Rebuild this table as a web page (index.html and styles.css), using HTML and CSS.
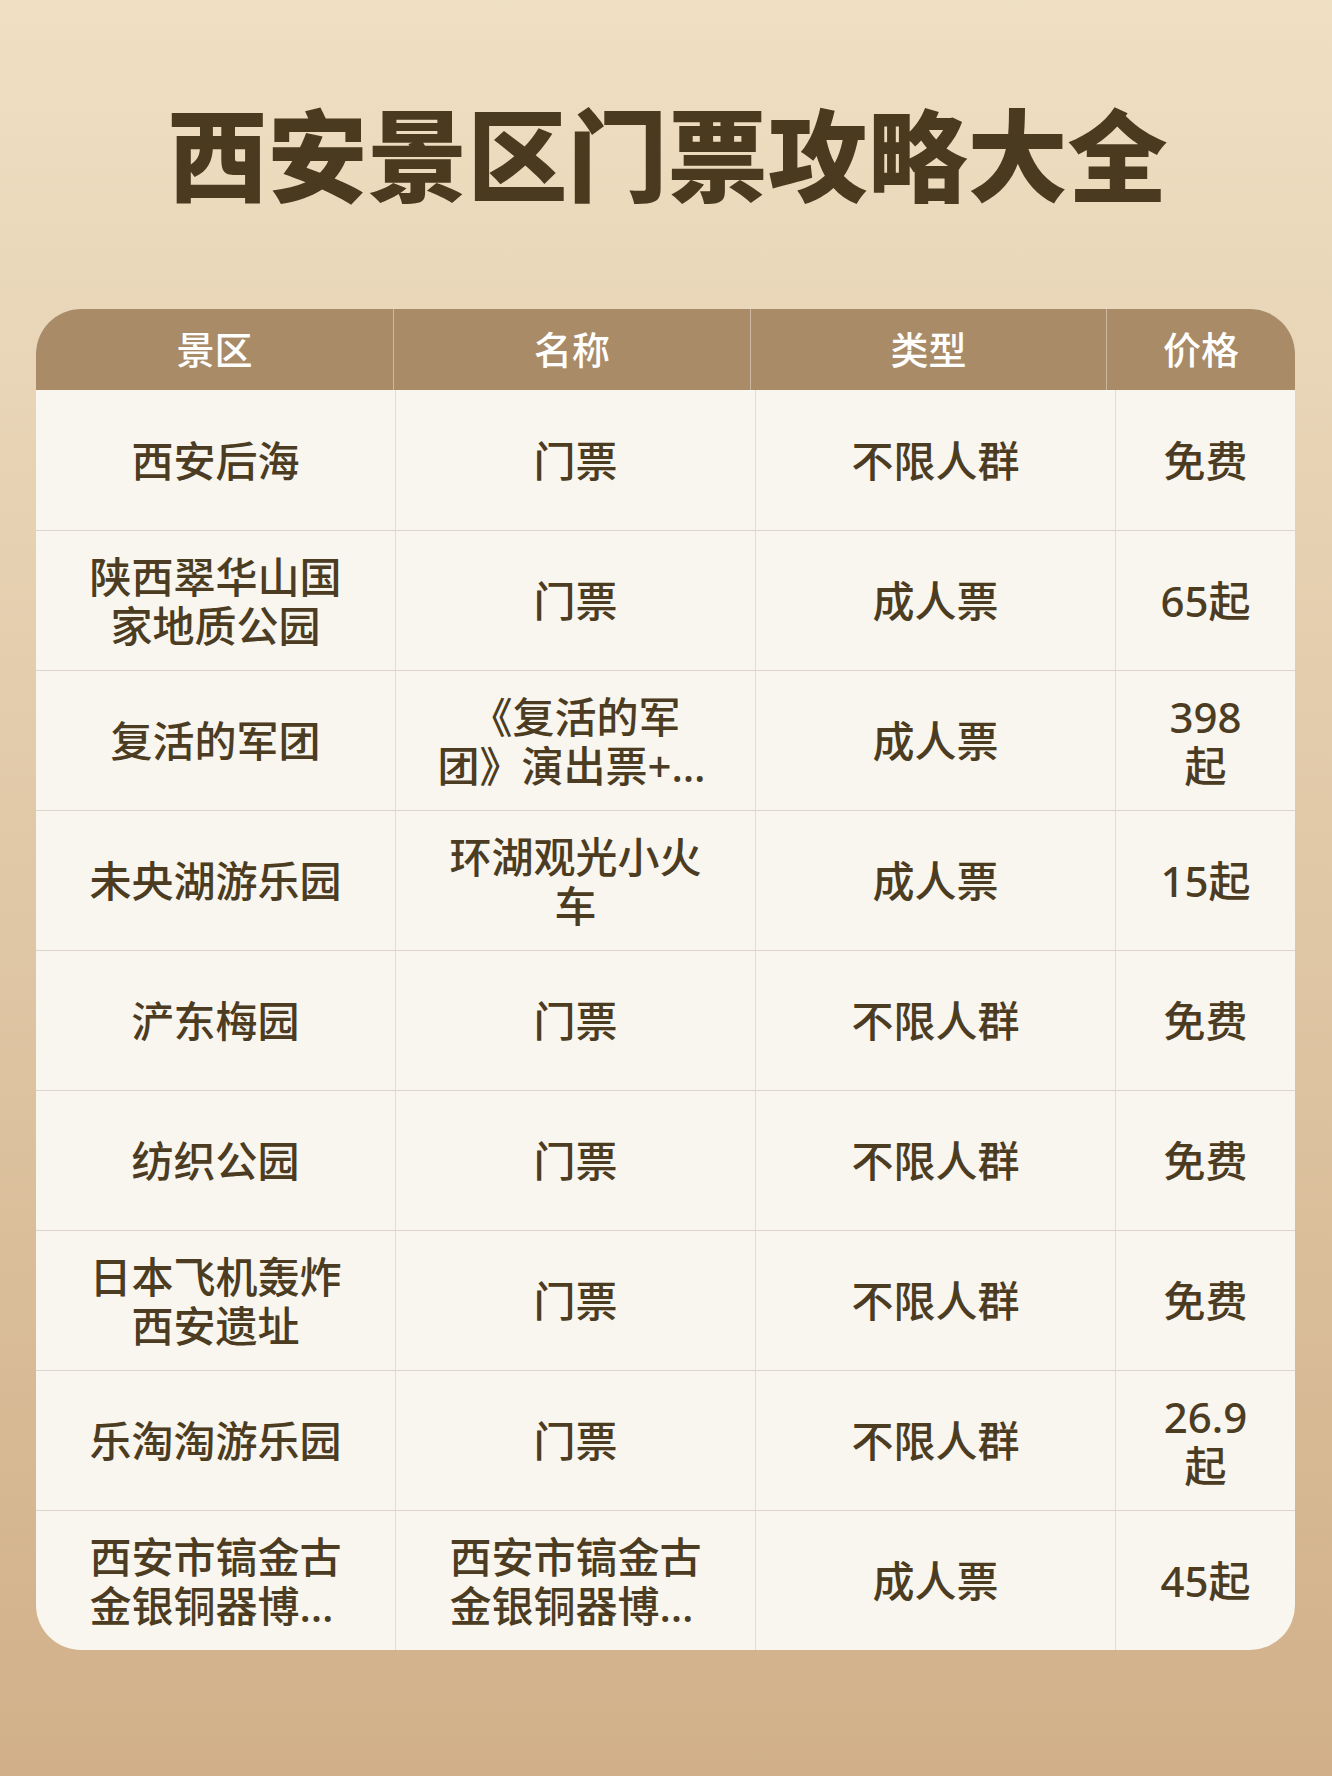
FILE: index.html
```html
<!DOCTYPE html>
<html lang="zh-CN">
<head>
<meta charset="utf-8">
<title>西安景区门票攻略大全</title>
<link rel="stylesheet" href="styles.css">
</head>
<body>
<div class="page">
  <h1 class="title">西安景区门票攻略大全</h1>
  <div class="table">
    <div class="head">
      <div class="hcell">景区</div>
      <div class="hcell">名称</div>
      <div class="hcell">类型</div>
      <div class="hcell">价格</div>
    </div>
    <div class="row">
      <div class="cell"><span class="txt">西安后海</span></div>
      <div class="cell"><span class="txt">门票</span></div>
      <div class="cell"><span class="txt">不限人群</span></div>
      <div class="cell"><span class="txt">免费</span></div>
    </div>
    <div class="row">
      <div class="cell"><span class="txt">陕西翠华山国家地质公园</span></div>
      <div class="cell"><span class="txt">门票</span></div>
      <div class="cell"><span class="txt">成人票</span></div>
      <div class="cell"><span class="txt">65起</span></div>
    </div>
    <div class="row">
      <div class="cell"><span class="txt">复活的军团</span></div>
      <div class="cell"><span class="txt clamp">《复活的军团》演出票+兵马俑门票</span></div>
      <div class="cell"><span class="txt">成人票</span></div>
      <div class="cell"><span class="txt">398起</span></div>
    </div>
    <div class="row">
      <div class="cell"><span class="txt">未央湖游乐园</span></div>
      <div class="cell"><span class="txt">环湖观光小火车</span></div>
      <div class="cell"><span class="txt">成人票</span></div>
      <div class="cell"><span class="txt">15起</span></div>
    </div>
    <div class="row">
      <div class="cell"><span class="txt">浐东梅园</span></div>
      <div class="cell"><span class="txt">门票</span></div>
      <div class="cell"><span class="txt">不限人群</span></div>
      <div class="cell"><span class="txt">免费</span></div>
    </div>
    <div class="row">
      <div class="cell"><span class="txt">纺织公园</span></div>
      <div class="cell"><span class="txt">门票</span></div>
      <div class="cell"><span class="txt">不限人群</span></div>
      <div class="cell"><span class="txt">免费</span></div>
    </div>
    <div class="row">
      <div class="cell"><span class="txt">日本飞机轰炸西安遗址</span></div>
      <div class="cell"><span class="txt">门票</span></div>
      <div class="cell"><span class="txt">不限人群</span></div>
      <div class="cell"><span class="txt">免费</span></div>
    </div>
    <div class="row">
      <div class="cell"><span class="txt">乐淘淘游乐园</span></div>
      <div class="cell"><span class="txt">门票</span></div>
      <div class="cell"><span class="txt">不限人群</span></div>
      <div class="cell"><span class="txt">26.9起</span></div>
    </div>
    <div class="row">
      <div class="cell"><span class="txt clamp">西安市镐金古金银铜器博物馆</span></div>
      <div class="cell"><span class="txt clamp">西安市镐金古金银铜器博物馆门票</span></div>
      <div class="cell"><span class="txt">成人票</span></div>
      <div class="cell"><span class="txt">45起</span></div>
    </div>
  </div>
</div>
</body>
</html>
```
FILE: styles.css
```css
* { box-sizing: border-box; }
html, body {
  margin: 0;
  padding: 0;
}
body {
  width: 1332px;
  min-height: 1776px;
  background: linear-gradient(180deg, #efdfc3 0%, #d1b089 100%);
  font-family: "Noto Sans", "Noto Sans CJK SC", sans-serif;
  color: #4b3c22;
  text-spacing-trim: space-all;
}
.page {
  padding: 101px 37px 0 36px;
}
.title {
  margin: 0;
  height: 100px;
  font-family: "Noto Sans CJK SC", sans-serif;
  font-size: 100px;
  line-height: 100px;
  font-weight: 900;
  text-align: center;
  color: #4a3a20;
  letter-spacing: 0;
  padding-left: 4px;
}
.table {
  margin-top: 108px;
  width: 1259px;
  border-radius: 45px;
  overflow: hidden;
  background: #f9f5ef;
}
.head {
  display: grid;
  grid-template-columns: 357px 357px 356px 189px;
  height: 81px;
  background: #a98b67;
}
.hcell {
  display: flex;
  align-items: center;
  justify-content: center;
  color: #ffffff;
  font-size: 38px;
  font-weight: 500;
  line-height: 1.2;
}
.hcell + .hcell {
  border-left: 1px solid #cbb8a0;
}
.row {
  display: grid;
  grid-template-columns: 359px 360px 360px 180px;
  height: 140px;
}
.row + .row {
  border-top: 1px solid #ddd5cb;
}
.cell {
  display: flex;
  align-items: center;
  justify-content: center;
  padding: 0 40px;
  text-align: center;
  font-size: 42px;
  font-weight: 500;
  line-height: 49px;
}
.cell:last-child {
  padding: 0 36px;
}
.cell + .cell {
  border-left: 1px solid #e3dcd3;
}
.txt {
  max-width: 100%;
}
.clamp {
  display: -webkit-box;
  -webkit-box-orient: vertical;
  -webkit-line-clamp: 2;
  overflow: hidden;
}
```
